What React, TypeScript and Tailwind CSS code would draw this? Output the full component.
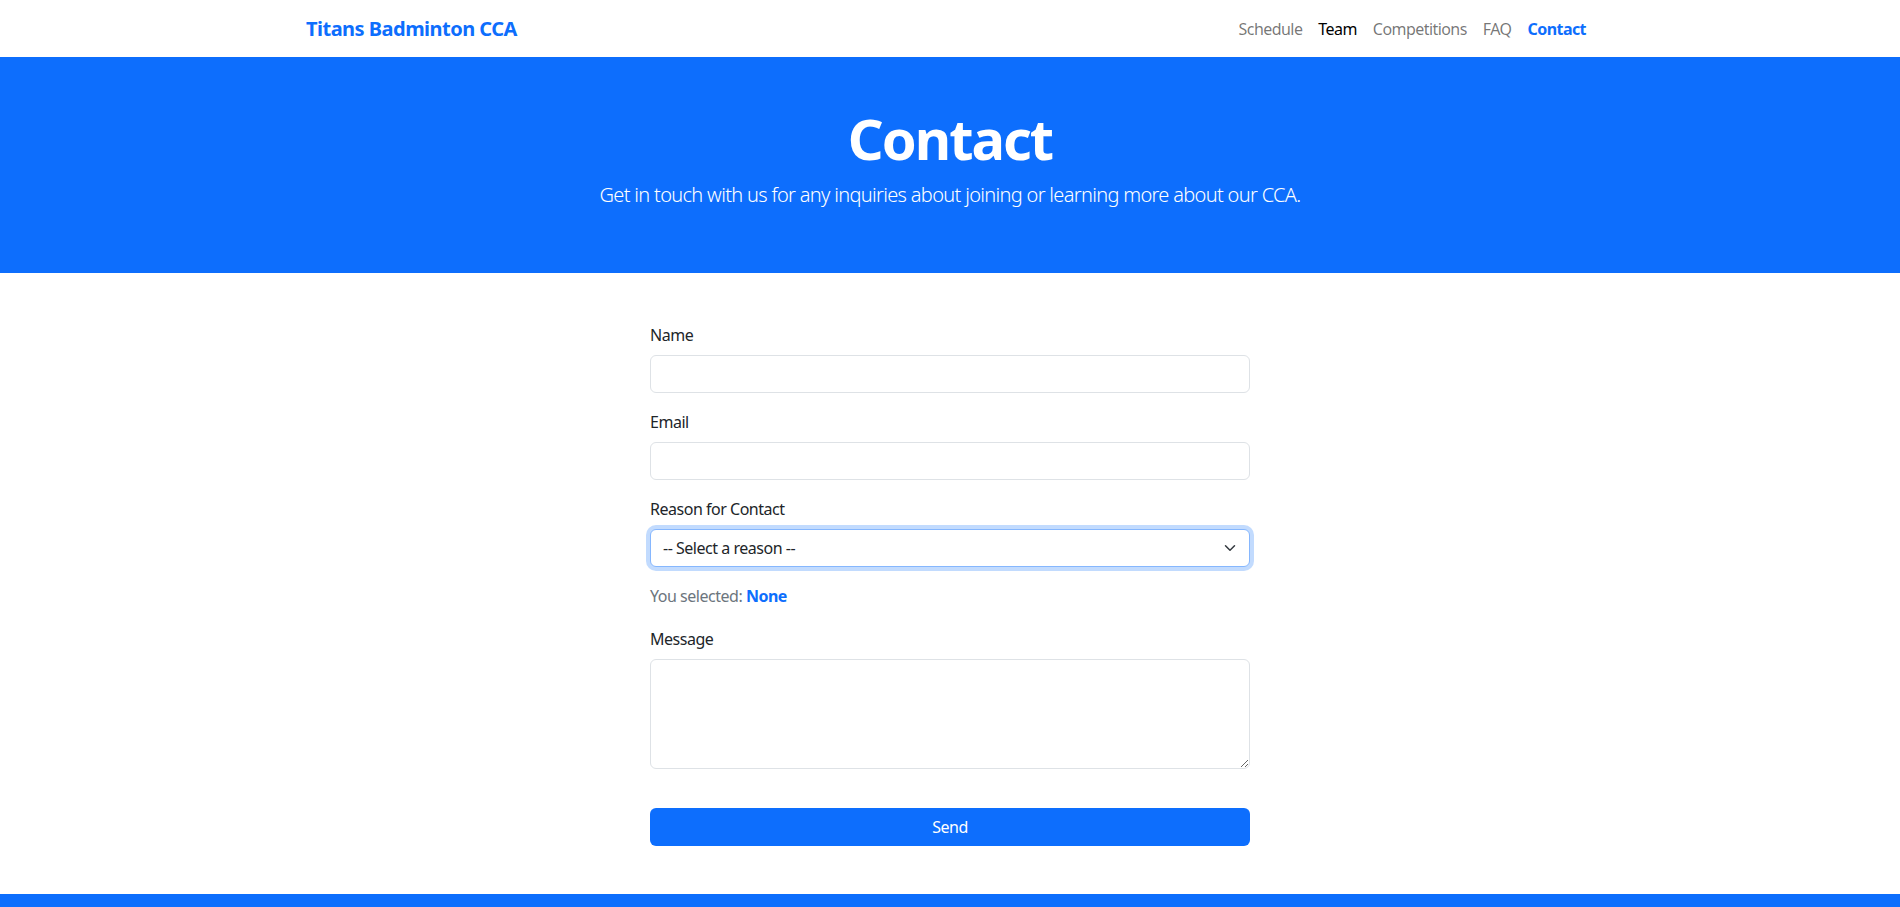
import { useState } from 'react';

const font = { fontFamily: '"Noto Sans", "Open Sans", sans-serif' };

const links = [
  { title: 'Schedule', cls: 'text-black/55' },
  { title: 'Team', cls: 'text-black' },
  { title: 'Competitions', cls: 'text-black/55' },
  { title: 'FAQ', cls: 'text-black/55' },
  { title: 'Contact', cls: 'font-bold text-[#0d6efd]' },
];

const inputClass =
  'block w-full rounded-[6px] border border-[#dee2e6] bg-white px-3 py-1.5 text-base leading-6 text-[#212529] outline-none';

export default function App() {
  const [reason, setReason] = useState('');

  return (
    <div className="min-h-screen bg-white tracking-[-0.03em] text-[#212529]" style={font}>
      <nav className="h-[57px] bg-white">
        <div className="mx-auto flex h-full w-[1320px] items-center justify-between px-3">
          <a href="#" className="pl-1 text-[20px] font-bold tracking-[-0.026em] text-[#0d6efd]">
            Titans Badminton CCA
          </a>
          <ul className="mr-1 flex items-center tracking-[-0.035em]">
            {links.map((link) => (
              <li key={link.title}>
                <a href="#" className={`block px-2 py-2 text-base ${link.cls}`}>
                  {link.title}
                </a>
              </li>
            ))}
          </ul>
        </div>
      </nav>

      <header className="bg-[#0d6efd] pb-12 pt-12 text-center text-white">
        <h1 className="mb-2 text-[56px] font-bold leading-[1.2] tracking-[-0.036em]">Contact</h1>
        <p className="mb-[15px] text-[20px] font-light leading-[30px] tracking-[-0.034em]">
          Get in touch with us for any inquiries about joining or learning more about our CCA.
        </p>
      </header>

      <main className="pb-12 pt-[50px]">
        <form className="mx-auto w-[600px]" onSubmit={(e) => e.preventDefault()}>
          <div className="mb-[17px]">
            <label className="mb-2 block leading-6">Name</label>
            <input type="text" className={inputClass} />
          </div>

          <div className="mb-[17px]">
            <label className="mb-2 block leading-6">Email</label>
            <input type="email" className={inputClass} />
          </div>

          <div className="mb-[17px]">
            <label className="mb-2 block leading-6">Reason for Contact</label>
            <div className="relative">
              <select
                value={reason}
                onChange={(e) => setReason(e.target.value)}
                className="block w-full appearance-none rounded-[6px] border border-[#86b7fe] bg-white py-1.5 pl-3 pr-9 text-base leading-6 tracking-[-0.03em] text-[#212529] shadow-[0_0_0_4px_rgba(13,110,253,0.25)] outline-none"
              >
                <option value="">-- Select a reason --</option>
                <option value="Joining">Joining the CCA</option>
                <option value="Training">Training Schedule</option>
                <option value="Other">Other</option>
              </select>
              <svg
                viewBox="0 0 16 16"
                className="pointer-events-none absolute right-3 top-1/2 h-3 w-4 -translate-y-1/2"
                fill="none"
                stroke="#343a40"
                strokeWidth="2"
                strokeLinecap="round"
                strokeLinejoin="round"
              >
                <path d="m2 5 6 6 6-6" />
              </svg>
            </div>
          </div>

          <p className="mb-[19px] leading-6 text-[#6c757d]">
            You selected: <strong className="font-bold text-[#0d6efd]">{reason || 'None'}</strong>
          </p>

          <div className="mb-[17px]">
            <label className="mb-2 block leading-6">Message</label>
            <textarea rows={4} className={`${inputClass} h-[110px] resize-y`} />
          </div>

          <button
            type="submit"
            className="mt-[39px] block h-[38px] w-full rounded-[6px] bg-[#0d6efd] text-base tracking-[-0.03em] text-white"
          >
            Send
          </button>
        </form>
      </main>

      <footer className="h-16 bg-[#0d6efd]" />
    </div>
  );
}
